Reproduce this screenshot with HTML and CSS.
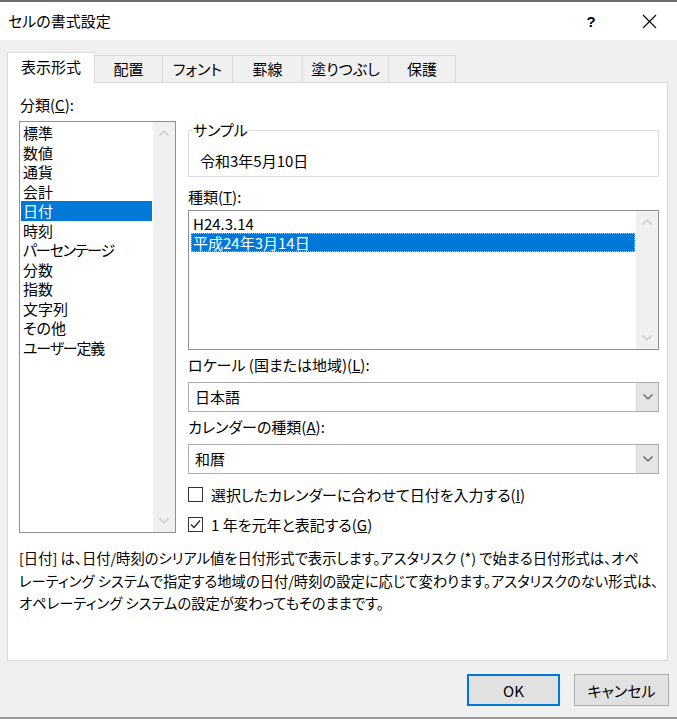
FILE: index.html
```html
<!DOCTYPE html>
<html lang="ja">
<head>
<meta charset="utf-8">
<title>セルの書式設定</title>
<link rel="stylesheet" href="styles.css">
</head>
<body>
<div class="window">
  <div class="titlebar">
    <div class="title">セルの書式設定</div>
    <div class="tb-buttons">
      <span class="tb-btn help">?</span>
      <span class="tb-btn close"><svg width="15" height="15" viewBox="0 0 15 15"><path d="M1 1L14 14M14 1L1 14" stroke="#000" stroke-width="1.1" fill="none"/></svg></span>
    </div>
  </div>
  <div class="client">
    <div class="tabs">
      <div class="tab active tab-wide">表示形式</div>
      <div class="tab tab-68">配置</div>
      <div class="tab tab-70">フォント</div>
      <div class="tab tab-70">罫線</div>
      <div class="tab tab-86">塗りつぶし</div>
      <div class="tab tab-67">保護</div>
    </div>
    <div class="panel">
      <div class="grid">
        <div class="label cat-label">分類(<u>C</u>):</div>
        <div class="listbox cat">
          <ul class="items">
            <li>標準</li>
            <li>数値</li>
            <li>通貨</li>
            <li>会計</li>
            <li class="sel">日付</li>
            <li>時刻</li>
            <li class="kana">パーセンテージ</li>
            <li>分数</li>
            <li>指数</li>
            <li>文字列</li>
            <li>その他</li>
            <li class="kana">ユーザー定義</li>
          </ul>
          <div class="vscroll">
            <span class="sarrow"><svg width="10" height="6" viewBox="0 0 10 6"><path d="M0.5 5.5L5 1L9.5 5.5" stroke="#c4c4c4" stroke-width="1.2" fill="none"/></svg></span>
            <span class="sarrow"><svg width="10" height="6" viewBox="0 0 10 6"><path d="M0.5 0.5L5 5L9.5 0.5" stroke="#c4c4c4" stroke-width="1.2" fill="none"/></svg></span>
          </div>
        </div>
        <div class="right">
          <fieldset class="sample">
            <legend>サンプル</legend>
            <div class="sample-value">令和3年5月10日</div>
          </fieldset>
          <div class="label type-label">種類(<u>T</u>):</div>
          <div class="listbox types">
            <ul class="items">
              <li>H24.3.14</li>
              <li class="sel focus">平成24年3月14日</li>
            </ul>
            <div class="vscroll">
              <span class="sarrow"><svg width="10" height="6" viewBox="0 0 10 6"><path d="M0.5 5.5L5 1L9.5 5.5" stroke="#c4c4c4" stroke-width="1.2" fill="none"/></svg></span>
              <span class="sarrow"><svg width="10" height="6" viewBox="0 0 10 6"><path d="M0.5 0.5L5 5L9.5 0.5" stroke="#c4c4c4" stroke-width="1.2" fill="none"/></svg></span>
            </div>
          </div>
          <div class="label combo-label">ロケール (国または地域)(<u>L</u>):</div>
          <div class="combo">
            <div class="value">日本語</div>
            <div class="arrow"><svg width="10" height="6" viewBox="0 0 10 6"><path d="M0.5 0.5L5 5L9.5 0.5" stroke="#555" stroke-width="1.1" fill="none"/></svg></div>
          </div>
          <div class="label combo-label">カレンダーの種類(<u>A</u>):</div>
          <div class="combo">
            <div class="value">和暦</div>
            <div class="arrow"><svg width="10" height="6" viewBox="0 0 10 6"><path d="M0.5 0.5L5 5L9.5 0.5" stroke="#555" stroke-width="1.1" fill="none"/></svg></div>
          </div>
          <div class="check">
            <span class="box"></span>
            <span>選択したカレンダーに合わせて日付を入力する(<u>I</u>)</span>
          </div>
          <div class="check">
            <span class="box"><svg width="13" height="13" viewBox="0 0 13 13"><path d="M2 6.5L5 9.5L11 2.5" stroke="#222" stroke-width="1.3" fill="none"/></svg></span>
            <span>1 年を元年と表記する(<u>G</u>)</span>
          </div>
        </div>
      </div>
      <p class="desc">[日付] は、日付/時刻のシリアル値を日付形式で表示します。アスタリスク (*) で始まる日付形式は、オペ<br>レーティング システムで指定する地域の日付/時刻の設定に応じて変わります。アスタリスクのない形式は、<br>オペレーティング システムの設定が変わってもそのままです。</p>
    </div>
    <div class="buttons">
      <button class="btn ok">OK</button>
      <button class="btn cancel">キャンセル</button>
    </div>
  </div>
</div>
</body>
</html>
```

FILE: styles.css
```css
* { box-sizing: border-box; }
html, body { margin: 0; padding: 0; }
body {
  width: 677px;
  height: 719px;
  overflow: hidden;
  font-family: "Noto Sans CJK JP", "Noto Sans", sans-serif;
  font-feature-settings: "palt";
  font-size: 15px;
  color: #000;
  background: #f0f0f0;
}
.window {
  width: 677px;
  height: 719px;
  display: flex;
  flex-direction: column;
  border-top: 2px solid #6e6e6e;
  border-bottom: 2px solid #9a9a9a;
  background: #f0f0f0;
}
.titlebar {
  height: 38px;
  flex: none;
  background: #fff;
  display: flex;
  align-items: center;
  justify-content: space-between;
  padding-left: 8px;
  padding-right: 5px;
}
.title { font-size: 15px; line-height: 20px; }
.tb-buttons { display: flex; height: 100%; }
.tb-btn {
  width: 46px;
  display: flex;
  align-items: center;
  justify-content: center;
}
.help {
  font-family: "Liberation Sans", sans-serif;
  font-size: 15px;
  font-weight: bold;
  margin-right: 12px;
}
.client {
  flex: 1;
  display: flex;
  flex-direction: column;
  padding: 12px 9px 0 7px;
}
.tabs {
  display: flex;
  align-items: flex-end;
  height: 30px;
  flex: none;
}
.tab {
  height: 27px;
  padding: 0 0 1px 0;
  border: 1px solid #d9d9d9;
  border-bottom: none;
  margin-left: -1px;
  display: flex;
  align-items: center;
  justify-content: center;
  background: #f0f0f0;
  line-height: 1;
  white-space: nowrap;
}
.tab-68 { width: 69px; }
.tab-70 { width: 71px; }
.tab-86 { width: 87px; }
.tab-67 { width: 68px; }
.tab.active {
  height: 31px;
  width: 88px;
  margin-left: 0;
  margin-bottom: -1px;
  background: #fff;
  position: relative;
  z-index: 1;
  padding-bottom: 3px;
}
.panel {
  height: 579px;
  flex: none;
  background: #fff;
  border: 1px solid #d9d9d9;
  padding: 13px 8px 0 11px;
}
.grid {
  display: grid;
  grid-template-columns: 157px 471px;
  column-gap: 12px;
  row-gap: 7px;
}
.label { line-height: 20px; white-space: nowrap; }
.cat-label { grid-column: 1; line-height: 18px; padding-left: 1px; }
.cat { grid-column: 1; grid-row: 2; }
.right { grid-column: 2; grid-row: 2; display: flex; flex-direction: column; }

.listbox {
  border: 1px solid #8f8f8f;
  background: #fff;
  display: flex;
}
.listbox .items {
  flex: 1;
  list-style: none;
  margin: 0;
  padding: 1px 1px 0 1px;
}
.listbox li {
  height: 19.5px;
  line-height: 19.5px;
  padding-left: 2px;
  white-space: nowrap;
}
.listbox li.kana { letter-spacing: -1.2px; }
.listbox li.sel { background: #0078d7; color: #fff; }
.listbox li.focus { outline: 1px dotted #9cc8f0; outline-offset: -1px; }
.cat { height: 412px; }
.types { height: 140px; margin-top: 3px; }
.types .items { padding: 3px 1px 0 2px; }
.types li { height: 19px; line-height: 19px; }
.vscroll {
  width: 22px;
  background: #f0f0f0;
  display: flex;
  flex-direction: column;
  justify-content: space-between;
}
.sarrow {
  height: 22px;
  display: flex;
  align-items: center;
  justify-content: center;
}

.sample {
  margin: 0;
  padding: 0 10px 5px 11px;
  border: 1px solid #dcdcdc;
  min-width: 0;
}
.sample legend {
  padding: 0 1px;
  margin-left: -8px;
  line-height: 18px;
}
.sample-value { margin-top: 12px; line-height: 20px; }
.type-label { margin-top: 10px; }
.combo-label { margin-top: 5px; margin-bottom: 7px; }
.combo {
  height: 30px;
  border: 1px solid #adadad;
  display: flex;
  background: #fff;
}
.combo .value { flex: 1; padding-left: 6px; line-height: 28px; }
.combo .arrow {
  width: 22px;
  background: #e5e5e5;
  border-left: 1px solid #dadada;
  display: flex;
  align-items: center;
  justify-content: center;
}
.check {
  display: flex;
  align-items: center;
  height: 20px;
  margin-top: 10px;
  gap: 8px;
  white-space: nowrap;
}
.box {
  width: 15px;
  height: 15px;
  border: 1px solid #333;
  background: #fff;
  display: flex;
  align-items: center;
  justify-content: center;
}
.desc {
  margin: 13px 0 0 0;
  font-size: 14.3px;
  line-height: 22.5px;
  white-space: nowrap;
}
.buttons {
  display: flex;
  justify-content: flex-end;
  gap: 14px;
  margin-top: 13px;
  margin-right: -1px;
}
.btn {
  height: 32px;
  border: 1px solid #adadad;
  background: #e1e1e1;
  font-family: inherit;
  font-feature-settings: "palt";
  font-size: 15px;
  color: #000;
  padding: 0;
}
.btn.ok { width: 93px; border: 2px solid #0078d7; }
.btn.cancel { width: 95px; }
```
